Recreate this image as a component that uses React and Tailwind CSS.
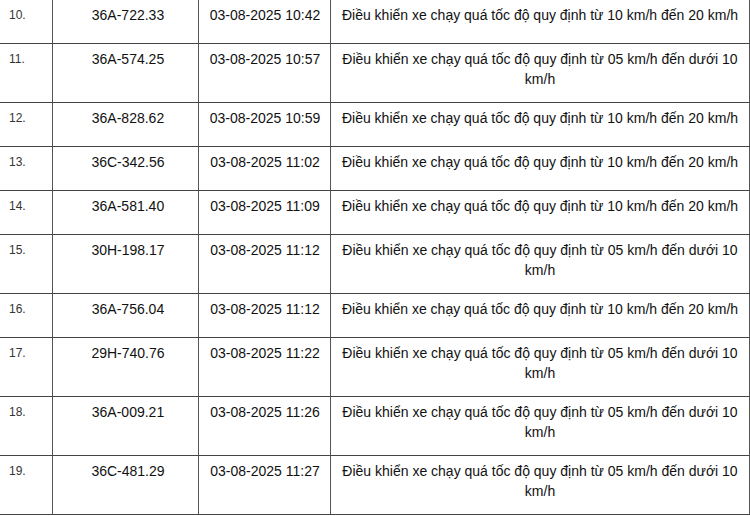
const rows = [
  { no: "10.", plate: "36A-722.33", time: "03-08-2025 10:42", desc: "Điều khiển xe chạy quá tốc độ quy định từ 10 km/h đến 20 km/h", tall: false },
  { no: "11.", plate: "36A-574.25", time: "03-08-2025 10:57", desc: "Điều khiển xe chạy quá tốc độ quy định từ 05 km/h đến dưới 10 km/h", tall: true },
  { no: "12.", plate: "36A-828.62", time: "03-08-2025 10:59", desc: "Điều khiển xe chạy quá tốc độ quy định từ 10 km/h đến 20 km/h", tall: false },
  { no: "13.", plate: "36C-342.56", time: "03-08-2025 11:02", desc: "Điều khiển xe chạy quá tốc độ quy định từ 10 km/h đến 20 km/h", tall: false },
  { no: "14.", plate: "36A-581.40", time: "03-08-2025 11:09", desc: "Điều khiển xe chạy quá tốc độ quy định từ 10 km/h đến 20 km/h", tall: false },
  { no: "15.", plate: "30H-198.17", time: "03-08-2025 11:12", desc: "Điều khiển xe chạy quá tốc độ quy định từ 05 km/h đến dưới 10 km/h", tall: true },
  { no: "16.", plate: "36A-756.04", time: "03-08-2025 11:12", desc: "Điều khiển xe chạy quá tốc độ quy định từ 10 km/h đến 20 km/h", tall: false },
  { no: "17.", plate: "29H-740.76", time: "03-08-2025 11:22", desc: "Điều khiển xe chạy quá tốc độ quy định từ 05 km/h đến dưới 10 km/h", tall: true },
  { no: "18.", plate: "36A-009.21", time: "03-08-2025 11:26", desc: "Điều khiển xe chạy quá tốc độ quy định từ 05 km/h đến dưới 10 km/h", tall: true },
  { no: "19.", plate: "36C-481.29", time: "03-08-2025 11:27", desc: "Điều khiển xe chạy quá tốc độ quy định từ 05 km/h đến dưới 10 km/h", tall: true },
];

export default function App() {
  return (
    <div
      className="w-[750px] h-[516px] overflow-hidden bg-white text-[#111] text-[14px] leading-[20px]"
      style={{ fontFamily: '"Liberation Sans", Arial, sans-serif' }}
    >
      {rows.map((r) => (
        <div
          key={r.no}
          className={"flex border-b border-[#444] " + (r.tall ? "h-[59px]" : "h-[44px]")}
        >
          <div className="w-[53px] shrink-0 border-r border-[#555] pl-[9px] pt-[5px] text-[12px] text-[#333]">
            {r.no}
          </div>
          <div className="w-[146px] shrink-0 border-r border-[#555] pl-[5px] pt-[5px] text-center">
            {r.plate}
          </div>
          <div className="w-[132px] shrink-0 border-r border-[#555] pl-[1px] pt-[5px] text-center">
            {r.time}
          </div>
          <div className="w-[419px] shrink-0 border-r border-[#555] px-[10px] pt-[5px] text-center">
            {r.desc}
          </div>
        </div>
      ))}
    </div>
  );
}
